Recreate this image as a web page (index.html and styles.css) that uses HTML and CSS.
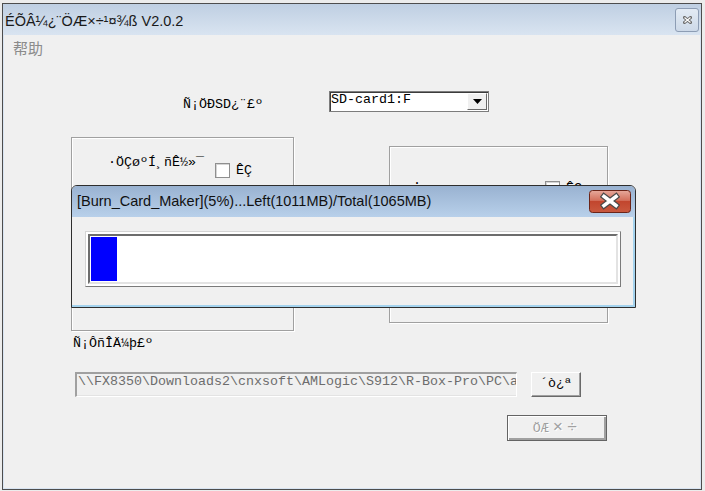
FILE: index.html
```html
<!DOCTYPE html>
<html lang="zh">
<head>
    <meta charset="UTF-8">
    <title>ÉÕÂ¼¿¨ÖÆ×÷¹¤¾ß V2.0.2</title>
    <link rel="stylesheet" href="styles.css">
</head>
<body>
    <div class="window">
        <div class="titlebar">
            <span class="title">ÉÕÂ¼¿¨ÖÆ×÷¹¤¾ß V2.0.2</span>
            <span class="close-small">
                <svg width="9" height="8" viewBox="0 0 9 8">
                    <path d="M1.5 1.5 L7.5 6.5 M7.5 1.5 L1.5 6.5" stroke="#6a6a6a" stroke-width="3" stroke-linecap="square"/>
                    <path d="M1.5 1.5 L7.5 6.5 M7.5 1.5 L1.5 6.5" stroke="#ffffff" stroke-width="1.2"/>
                </svg>
            </span>
        </div>

        <div class="client">
            <div class="menubar"><span>帮助</span></div>

            <div class="form">
                <div class="row-sd">
                    <span class="lbl sd-lbl">Ñ¡ÖÐSD¿¨£º</span>
                    <div class="combo">
                        <span class="combo-text">SD-card1:F</span>
                        <span class="combo-btn">
                            <svg width="9" height="5" viewBox="0 0 9 5"><path d="M0 0 H9 L4.5 5 Z" fill="#000"/></svg>
                        </span>
                    </div>
                </div>

                <div class="groups">
                    <div class="group group-left">
                        <span class="lbl">·ÖÇøºÍ¸ñÊ½»¯</span>
                        <span class="check"></span>
                        <span class="lbl check-lbl">ÊÇ</span>
                    </div>
                    <div class="group group-right">
                        <span class="lbl">·</span>
                        <span class="check"></span>
                        <span class="lbl check-lbl">ÊÇ</span>
                    </div>
                </div>

                <div class="lbl file-lbl">Ñ¡ÔñÎÄ¼þ£º</div>

                <div class="row-path">
                    <div class="path">\\FX8350\Downloads2\cnxsoft\AMLogic\S912\R-Box-Pro\PC\a</div>
                    <button class="btn btn-open">´ò¿ª</button>
                </div>

                <div class="row-run">
                    <button class="btn btn-run" disabled>ÖÆ<span class="wide">×÷</span></button>
                </div>
            </div>
        </div>

        <!-- progress dialog on top of the main window -->
        <div class="dialog">
            <div class="dlg-title">
                <span class="dlg-text">[Burn_Card_Maker](5%)...Left(1011MB)/Total(1065MB)</span>
                <span class="dlg-close">
                    <svg width="42" height="23" viewBox="0 0 42 23">
                        <defs>
                            <linearGradient id="red" x1="0" y1="0" x2="0" y2="1">
                                <stop offset="0" stop-color="#e6a99c"/>
                                <stop offset="0.45" stop-color="#d3705c"/>
                                <stop offset="0.5" stop-color="#c2462e"/>
                                <stop offset="1" stop-color="#c9593f"/>
                            </linearGradient>
                        </defs>
                        <rect x="0.5" y="0.5" width="41" height="22" rx="3" fill="url(#red)" stroke="#6b2418"/>
                        <path d="M15 6.5 L27 15.5 M27 6.5 L15 15.5" stroke="#4a4a4a" stroke-width="6" stroke-linecap="square"/>
                        <path d="M15 6.5 L27 15.5 M27 6.5 L15 15.5" stroke="#ffffff" stroke-width="3.6" stroke-linecap="square"/>
                    </svg>
                </span>
            </div>
            <div class="dlg-body">
                <div class="progress">
                    <div class="progress-inner">
                        <div class="progress-fill" style="width: 5%"></div>
                    </div>
                </div>
            </div>
        </div>
    </div>
</body>
</html>
```

FILE: styles.css
```css
body {
    margin: 0;
    background: #ececec;
    font-family: "Liberation Mono", monospace;
    font-size: 13.33px;
    color: #000;
}

.window {
    position: relative;
    margin: 3px 0 0 2px;
    width: 700px;
    height: 487px;
    border: 1px solid #4d4d4d;
    box-sizing: border-box;
    display: flex;
    flex-direction: column;
}

.titlebar {
    height: 31px;
    background: linear-gradient(#bfcfe2, #d9e4f1);
    display: flex;
    justify-content: space-between;
    align-items: center;
    padding: 0 2px;
}

.title {
    font-family: "Liberation Sans", sans-serif;
    font-size: 14.5px;
    color: #1a1a1a;
    padding-top: 2px;
}

.close-small {
    width: 22px;
    height: 22px;
    border: 1px solid #8d9db4;
    border-radius: 3px;
    background: linear-gradient(#e3ebf4, #cdd9e8);
    display: flex;
    align-items: center;
    justify-content: center;
}

.client {
    flex: 1;
    background: #f0f0f0;
    border: 1px solid #d8e4f2;
    border-top: none;
}

.menubar {
    height: 23px;
    padding: 3px 0 0 9px;
    box-sizing: border-box;
    font-family: "Noto Sans CJK SC", sans-serif;
    font-size: 15px;
    line-height: 20px;
    color: #8b8b8b;
}

.lbl {
    line-height: 16px;
    white-space: nowrap;
}

.row-sd {
    display: flex;
    margin-top: 33px;
    padding-left: 179px;
    height: 21px;
}

.sd-lbl {
    width: 146px;
    margin-top: 6px;
}

.combo {
    width: 160px;
    height: 21px;
    box-sizing: border-box;
    border: 1px solid #7c7c7c;
    box-shadow: inset 1px 1px 0 #3c3c3c;
    background: #fff;
    display: flex;
    justify-content: space-between;
}

.combo-text {
    line-height: 14px;
    padding-left: 1px;
    margin-top: 1px;
}

.combo-btn {
    width: 18px;
    height: 15px;
    margin: 1px 1px 0 0;
    background: #f0f0f0;
    border-style: solid;
    border-width: 1px;
    border-color: #fff #696969 #696969 #fff;
    display: flex;
    align-items: center;
    justify-content: center;
}

.groups {
    display: flex;
    align-items: flex-start;
    margin-top: 25px;
}

.group {
    display: flex;
    align-items: flex-start;
    box-sizing: border-box;
    border: 1px solid #a0a0a0;
    box-shadow: 1px 1px 0 #fff, inset 1px 1px 0 #fff;
}

.group-left {
    margin-left: 67px;
    width: 223px;
    height: 194px;
    padding: 17px 0 0 36px;
}

.group-right {
    margin: 9px 0 0 95px;
    width: 219px;
    height: 177px;
    padding: 29px 0 0 23px;
}

.check {
    width: 13px;
    height: 13px;
    background: #fff;
    border: 1px solid #8f8f8f;
    box-shadow: inset 1px 1px 0 #d5d5d5;
    margin: 8px 0 0 11px;
}

.group-right .check {
    margin: 5px 0 0 124px;
}

.check-lbl {
    margin: 8px 0 0 6px;
}

.group-right .check-lbl {
    margin-top: 5px;
}

.file-lbl {
    margin-top: 5px;
    padding-left: 69px;
}

.row-path {
    display: flex;
    margin-top: 20px;
}

.path {
    margin-left: 71px;
    width: 442px;
    height: 25px;
    box-sizing: border-box;
    overflow: hidden;
    white-space: nowrap;
    color: #6d6d6d;
    line-height: 16px;
    padding: 0 0 0 1px;
    border-style: solid;
    border-width: 2px 1px 1px 2px;
    border-color: #a0a0a0 #fff #fff #a0a0a0;
    box-shadow: inset 0 -1px 0 #e3e3e3;
}

.btn {
    font-family: "Liberation Mono", monospace;
    font-size: 13.33px;
    background: #f0f0f0;
    box-sizing: border-box;
    padding: 0 0 2px 0;
    border-style: solid;
    border-width: 1px;
    border-color: #fff #696969 #696969 #fff;
    box-shadow: inset -1px -1px 0 #a0a0a0;
    color: #000;
}

.btn-open {
    margin-left: 14px;
    width: 50px;
    height: 25px;
}

.row-run {
    margin-top: 18px;
}

.btn-run {
    margin-left: 503px;
    width: 100px;
    height: 26px;
    border: 1px solid #646464;
    box-shadow: inset 1px 1px 0 #fff, inset -2px -2px 0 #a0a0a0;
    color: #a0a0a0;
    text-shadow: 1px 1px 0 #fff;
}

/* the x and / glyphs are full width in the original font */
.wide {
    font-size: 17px;
    letter-spacing: 4px;
    margin-left: 4px;
}

.dialog {
    position: absolute;
    left: 68px;
    top: 181px;
    width: 565px;
    height: 123px;
    box-sizing: border-box;
    border: 1px solid #2e2e2e;
    border-radius: 6px 6px 0 0;
    overflow: hidden;
    display: flex;
    flex-direction: column;
}

.dlg-title {
    height: 31px;
    flex-shrink: 0;
    background: linear-gradient(#99b2d1, #b8d0ea);
    display: flex;
    justify-content: space-between;
    align-items: flex-start;
    padding: 0 4px 0 5px;
}

.dlg-text {
    font-family: "Liberation Sans", sans-serif;
    font-size: 14.5px;
    line-height: 31px;
    color: #111;
}

.dlg-close {
    margin-top: 4px;
    height: 23px;
}

.dlg-close svg {
    display: block;
}

.dlg-body {
    flex: 1;
    background: #f0f0f0;
    border-right: 2px solid #a4d3ee;
    border-bottom: 2px solid #a4d3ee;
    padding: 14px 0 0 13px;
}

.progress {
    width: 536px;
    height: 56px;
    box-sizing: border-box;
    background: #fff;
    border: 1px solid;
    border-color: #d4d4d4 #7a7a7a #7a7a7a #d4d4d4;
    padding: 2px;
}

.progress-inner {
    height: 100%;
    box-sizing: border-box;
    border: 2px solid;
    border-color: #6d6d6d #e3e3e3 #e3e3e3 #6d6d6d;
    padding: 1px;
}

.progress-fill {
    height: 100%;
    background: #0000ff;
}
```
